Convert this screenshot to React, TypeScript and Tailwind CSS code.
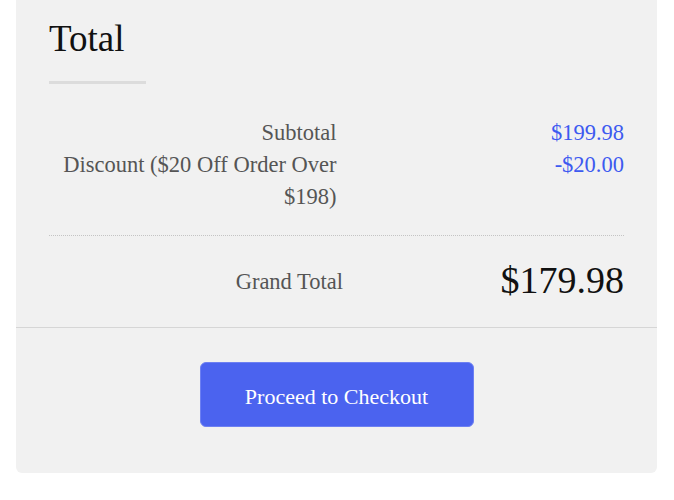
import React from "react";

const rows = [
  { label: "Subtotal", value: "$199.98" },
  { label: "Discount ($20 Off Order Over $198)", value: "-$20.00" },
];

export default function App() {
  return (
    <div className="min-h-screen bg-white font-['Liberation_Serif',serif]">
      <div className="ml-4 mr-[17px] -mt-5 rounded-md bg-[#f1f1f1]">
        {/* summary block */}
        <div className="px-[33px] pt-[40px] pb-[28px]">
          <h2 className="text-[37px] leading-none text-[#111]">Total</h2>
          <div className="mt-6 h-[3px] w-[97px] bg-[#dcdcdc]" />

          <div className="mt-[33px] border-b border-dotted border-[#c4c4c4] pb-[22px] text-[22.5px] leading-[32px]">
            {rows.map((r) => (
              <div key={r.label} className="grid grid-cols-2 text-right">
                <span className="text-[#555]">{r.label}</span>
                <span className="text-[#3d5af0]">{r.value}</span>
              </div>
            ))}
          </div>

          <div className="grid grid-cols-[294px_1fr] items-center pt-[25px] text-right">
            <span className="mt-[3px] text-[22.5px] leading-[32px] text-[#555]">Grand Total</span>
            <span className="text-[38px] leading-none text-[#111]">$179.98</span>
          </div>
        </div>

        {/* checkout */}
        <div className="flex justify-center border-t border-[#d6d6d6] pt-[34px] pb-[46px]">
          <button className="h-[65px] w-[274px] rounded-md border border-[#6d80f2] bg-[#4b63ef] pt-[3px] text-[22px] text-white">
            Proceed to Checkout
          </button>
        </div>
      </div>
    </div>
  );
}
